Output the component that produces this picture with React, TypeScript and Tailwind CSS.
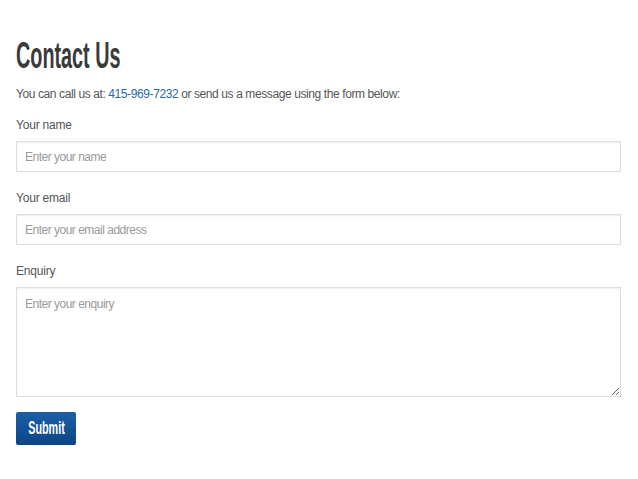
const Field = ({ label, placeholder }: { label: string; placeholder: string }) => (
  <div className="flex flex-col">
    <label className="text-[12px] leading-[16px] tracking-[-0.2px] text-[#555] mb-[8px]">{label}</label>
    <input
      placeholder={placeholder}
      className="h-[31px] w-full border border-[#dedede] shadow-[inset_0_1px_2px_rgba(0,0,0,0.07)] px-[8px] text-[12px] tracking-[-0.5px] text-[#555] placeholder:text-[#9a9a9a] outline-none"
    />
  </div>
);

export default function App() {
  return (
    <div className="min-h-[479px] bg-white px-[16px] pt-[36px] font-['Liberation_Sans',Arial,sans-serif]">
      <h1 className="h-[40px] text-[36px] leading-[40px] font-bold text-[#3a3a3a]">
        <span className="inline-block origin-left scale-x-[0.55]">Contact Us</span>
      </h1>
      <p className="mt-[10px] text-[12px] leading-[16px] tracking-[-0.4px] text-[#555]">
        You can call us at: <a className="text-[#1f6aa8]">415-969-7232</a> or send us a message using the form below:
      </p>
      <form className="mt-[15px] flex flex-col gap-[18px] w-[605px]">
        <Field label="Your name" placeholder="Enter your name" />
        <Field label="Your email" placeholder="Enter your email address" />
        <div className="flex flex-col">
          <label className="text-[12px] leading-[16px] tracking-[-0.2px] text-[#555] mb-[8px]">Enquiry</label>
          <textarea
            placeholder="Enter your enquiry"
            className="h-[110px] w-full border border-[#dedede] shadow-[inset_0_1px_2px_rgba(0,0,0,0.07)] px-[8px] py-[7px] text-[12px] tracking-[-0.5px] text-[#555] placeholder:text-[#9a9a9a] outline-none"
          />
        </div>
      </form>
      <button className="mt-[15px] h-[33px] w-[60px] rounded-[2px] bg-gradient-to-b from-[#1c5fa6] to-[#0b4587] text-white text-[18px] font-bold leading-[33px] overflow-hidden">
        <span className="inline-block scale-x-[0.6]">Submit</span>
      </button>
    </div>
  );
}
